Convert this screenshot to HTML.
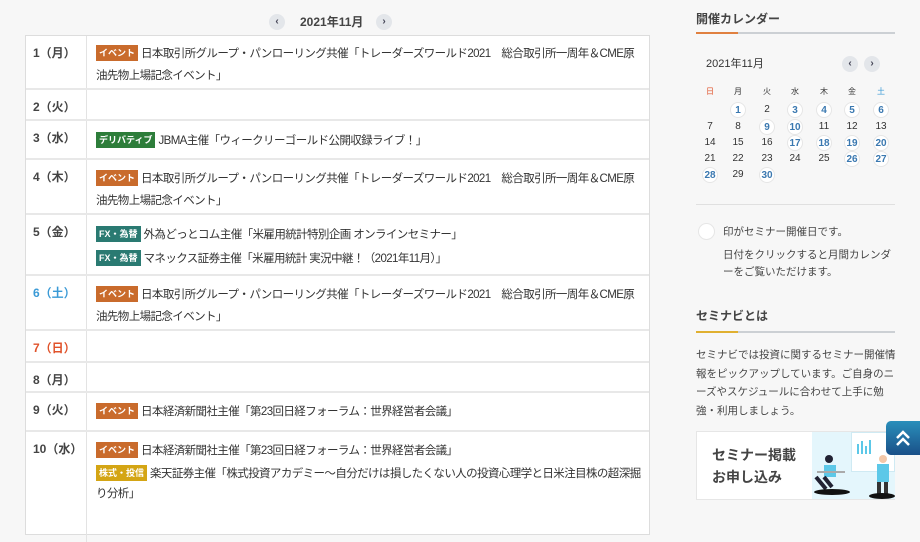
<!DOCTYPE html>
<html><head><meta charset="utf-8"><style>
*{margin:0;padding:0;box-sizing:border-box}
body{width:920px;height:503px;overflow:hidden;background:#f7f7f7;font-family:"Liberation Sans","Noto Sans CJK JP",sans-serif;color:#333;position:relative;font-size:12px}
.a{position:absolute;white-space:nowrap}
.nav{position:absolute;width:16px;height:16px;border-radius:50%;background:#e3e6ea;color:#445;font-size:10px;font-weight:bold;text-align:center;line-height:16px}
#tbl{position:absolute;left:25px;top:35px;width:625px;height:500px;background:#fff;border:1px solid #ddd}
.row{position:absolute;left:0;width:623px;border-bottom:2px solid #e8e8e8}
.dcol{position:absolute;left:60px;top:0;bottom:0;border-left:1px solid #e3e3e3}
.d{position:absolute;left:7px;top:8px;font-size:12px;font-weight:bold;color:#444}
.ev{position:absolute;left:70px;line-height:22px;color:#333;white-space:nowrap;font-size:11.5px;letter-spacing:-0.6px}
.lb{display:inline-block;color:#fff;font-size:9px;font-weight:bold;padding:0 3px;height:16px;line-height:16px;vertical-align:1px;margin-right:3px;letter-spacing:0}
.o{background:#c96b2c}.g{background:#2d7d3a}.t{background:#2a7a72}.y{background:#d4a514}
.cal{position:absolute;font-size:10px;color:#333;text-align:center;width:16px;line-height:16px}
.c{background:#fff;border-radius:50%;border:1px solid #e6e6e6;color:#3a78b0;font-weight:bold;height:16px}
</style></head><body>
<div class="nav" style="left:269px;top:14px">‹</div>
<div class="a" style="left:300px;top:13px;font-size:12px;font-weight:bold;color:#444">2021年11月</div>
<div class="nav" style="left:376px;top:14px">›</div>

<div id="tbl">
<div class="row" style="top:0;height:54px"><div class="dcol"></div><div class="d">1（月）</div><div class="ev" style="top:7px"><span class="lb o">イベント</span>日本取引所グループ・パンローリング共催「トレーダーズワールド2021　総合取引所一周年＆CME原<br>油先物上場記念イベント」</div></div>
<div class="row" style="top:54px;height:31px"><div class="dcol"></div><div class="d">2（火）</div></div>
<div class="row" style="top:85px;height:39px"><div class="dcol"></div><div class="d">3（水）</div><div class="ev" style="top:9px"><span class="lb g">デリバティブ</span>JBMA主催「ウィークリーゴールド公開収録ライブ！」</div></div>
<div class="row" style="top:124px;height:55px"><div class="dcol"></div><div class="d">4（木）</div><div class="ev" style="top:8px"><span class="lb o">イベント</span>日本取引所グループ・パンローリング共催「トレーダーズワールド2021　総合取引所一周年＆CME原<br>油先物上場記念イベント」</div></div>
<div class="row" style="top:179px;height:61px"><div class="dcol"></div><div class="d">5（金）</div><div class="ev" style="top:8px;line-height:24px"><span class="lb t">FX・為替</span>外為どっとコム主催「米雇用統計特別企画 オンラインセミナー」<br><span class="lb t">FX・為替</span>マネックス証券主催「米雇用統計 実況中継！（2021年11月）」</div></div>
<div class="row" style="top:240px;height:55px"><div class="dcol"></div><div class="d" style="color:#3a9ad6">6（土）</div><div class="ev" style="top:8px"><span class="lb o">イベント</span>日本取引所グループ・パンローリング共催「トレーダーズワールド2021　総合取引所一周年＆CME原<br>油先物上場記念イベント」</div></div>
<div class="row" style="top:295px;height:32px"><div class="dcol"></div><div class="d" style="color:#e0522a">7（日）</div></div>
<div class="row" style="top:327px;height:30px"><div class="dcol"></div><div class="d">8（月）</div></div>
<div class="row" style="top:357px;height:39px"><div class="dcol"></div><div class="d">9（火）</div><div class="ev" style="top:8px"><span class="lb o">イベント</span>日本経済新聞社主催「第23回日経フォーラム：世界経営者会議」</div></div>
<div class="row" style="top:396px;height:110px;border:0"><div class="dcol"></div><div class="d">10（水）</div><div class="ev" style="top:8px"><span class="lb o">イベント</span>日本経済新聞社主催「第23回日経フォーラム：世界経営者会議」</div><div class="ev" style="top:32px;line-height:20px"><span class="lb y">株式・投信</span>楽天証券主催「株式投資アカデミー～自分だけは損したくない人の投資心理学と日米注目株の超深掘<br>り分析」</div></div>
</div>

<div class="a" style="left:696px;top:10px;font-size:12px;font-weight:bold;color:#444">開催カレンダー</div>
<div class="a" style="left:696px;top:32px;width:199px;height:2px;background:#ccd0d4"></div>
<div class="a" style="left:696px;top:32px;width:42px;height:2px;background:#e08040"></div>
<div class="a" style="left:706px;top:55px;font-size:11px;color:#333">2021年11月</div>
<div class="nav" style="left:842px;top:56px">‹</div>
<div class="nav" style="left:864px;top:56px">›</div>
<div class="cal" style="left:702px;top:84px;font-size:8px;color:#e0522a">日</div>
<div class="cal" style="left:730px;top:84px;font-size:8px">月</div>
<div class="cal" style="left:759px;top:84px;font-size:8px">火</div>
<div class="cal" style="left:787px;top:84px;font-size:8px">水</div>
<div class="cal" style="left:816px;top:84px;font-size:8px">木</div>
<div class="cal" style="left:844px;top:84px;font-size:8px">金</div>
<div class="cal" style="left:873px;top:84px;font-size:8px;color:#3a9ad6">土</div>
<div class="cal c" style="left:730px;top:102px">1</div><div class="cal" style="left:759px;top:102px">2</div><div class="cal c" style="left:787px;top:102px">3</div><div class="cal c" style="left:816px;top:102px">4</div><div class="cal c" style="left:844px;top:102px">5</div><div class="cal c" style="left:873px;top:102px">6</div>
<div class="cal" style="left:702px;top:119px">7</div><div class="cal" style="left:730px;top:119px">8</div><div class="cal c" style="left:759px;top:119px">9</div><div class="cal c" style="left:787px;top:119px">10</div><div class="cal" style="left:816px;top:119px">11</div><div class="cal" style="left:844px;top:119px">12</div><div class="cal" style="left:873px;top:119px">13</div>
<div class="cal" style="left:702px;top:135px">14</div><div class="cal" style="left:730px;top:135px">15</div><div class="cal" style="left:759px;top:135px">16</div><div class="cal c" style="left:787px;top:135px">17</div><div class="cal c" style="left:816px;top:135px">18</div><div class="cal c" style="left:844px;top:135px">19</div><div class="cal c" style="left:873px;top:135px">20</div>
<div class="cal" style="left:702px;top:151px">21</div><div class="cal" style="left:730px;top:151px">22</div><div class="cal" style="left:759px;top:151px">23</div><div class="cal" style="left:787px;top:151px">24</div><div class="cal" style="left:816px;top:151px">25</div><div class="cal c" style="left:844px;top:151px">26</div><div class="cal c" style="left:873px;top:151px">27</div>
<div class="cal c" style="left:702px;top:167px">28</div><div class="cal" style="left:730px;top:167px">29</div><div class="cal c" style="left:759px;top:167px">30</div>
<div class="a" style="left:696px;top:204px;width:199px;height:1px;background:#e0e0e0"></div>
<div class="a" style="left:698px;top:223px;width:17px;height:17px;border-radius:50%;background:#fff;border:1px solid #e6e6e6"></div>
<div class="a" style="left:723px;top:224px;font-size:10.5px;color:#444">印がセミナー開催日です。</div>
<div class="a" style="left:723px;top:247px;font-size:10.5px;color:#444;line-height:17px">日付をクリックすると月間カレンダ<br>ーをご覧いただけます。</div>
<div class="a" style="left:696px;top:307px;font-size:12px;font-weight:bold;color:#444">セミナビとは</div>
<div class="a" style="left:696px;top:331px;width:199px;height:2px;background:#ccd0d4"></div>
<div class="a" style="left:696px;top:331px;width:42px;height:2px;background:#e0b030"></div>
<div class="a" style="left:696px;top:346px;font-size:10.5px;color:#444;line-height:18.5px">セミナビでは投資に関するセミナー開催情<br>報をピックアップしています。ご自身のニ<br>ーズやスケジュールに合わせて上手に勉<br>強・利用しましょう。</div>
<div class="a" style="left:696px;top:431px;width:199px;height:69px;background:#fff;border:1px solid #e6e6e6"></div>
<div class="a" style="left:712px;top:444px;font-size:14px;font-weight:bold;color:#444;line-height:22px">セミナー掲載<br>お申し込み</div>
<div class="a" style="left:812px;top:432px;width:83px;height:67px;background:#e4f6fc"></div>
<div class="a" style="left:851px;top:432px;width:44px;height:40px;background:#fff;border:1px solid #cfeaf3"></div>
<svg class="a" style="left:812px;top:432px" width="83" height="67">
<rect x="45" y="12" width="2" height="10" fill="#5cc8e8"/><rect x="49" y="9" width="2" height="13" fill="#5cc8e8"/><rect x="53" y="14" width="2" height="8" fill="#5cc8e8"/><rect x="57" y="8" width="2" height="14" fill="#5cc8e8"/>
<circle cx="17" cy="27" r="4" fill="#223"/><path d="M12 33h12v12H12z" fill="#5cc8e8"/><path d="M5 40h28" stroke="#aaa" stroke-width="2"/><path d="M12 45l8 10M4 45l10 12" stroke="#223" stroke-width="4"/>
<ellipse cx="20" cy="60" rx="18" ry="3" fill="#111"/>
<circle cx="71" cy="27" r="4" fill="#f3c7a8"/><path d="M65 32h12v18H65z" fill="#5cc8e8"/><path d="M67 50v14M74 50v14" stroke="#333" stroke-width="4"/><ellipse cx="70" cy="64" rx="13" ry="3" fill="#111"/>
</svg>
<div class="a" style="left:886px;top:421px;width:40px;height:34px;border-radius:5px;background:linear-gradient(#2a8fbb,#1a5088)"></div>
<svg class="a" style="left:886px;top:421px" width="34" height="34"><path d="M11 17l6-6 6 6M11 24l6-6 6 6" fill="none" stroke="#fff" stroke-width="2.5"/></svg>
</body></html>
